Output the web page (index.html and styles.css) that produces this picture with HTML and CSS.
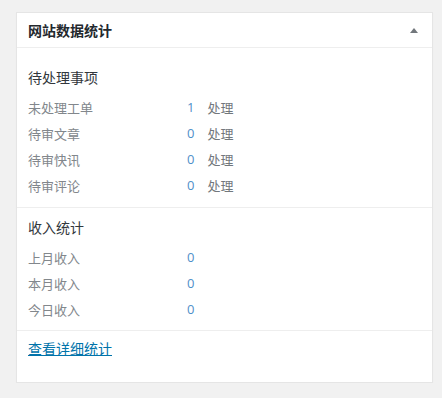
FILE: index.html
```html
<!DOCTYPE html>
<html lang="zh-CN">
<head>
<meta charset="utf-8">
<title>网站数据统计</title>
<link rel="stylesheet" href="styles.css">
</head>
<body>
<div class="card">
  <div class="card-head">
    <h2 class="card-title">网站数据统计</h2>
    <span class="toggle"></span>
  </div>
  <div class="section section-pending">
    <h3 class="section-title">待处理事项</h3>
    <div class="row"><span class="label">未处理工单</span><span class="num">1</span><span class="act">处理</span></div>
    <div class="row"><span class="label">待审文章</span><span class="num">0</span><span class="act">处理</span></div>
    <div class="row"><span class="label">待审快讯</span><span class="num">0</span><span class="act">处理</span></div>
    <div class="row"><span class="label">待审评论</span><span class="num">0</span><span class="act">处理</span></div>
  </div>
  <div class="section section-income">
    <h3 class="section-title">收入统计</h3>
    <div class="row"><span class="label">上月收入</span><span class="num">0</span></div>
    <div class="row"><span class="label">本月收入</span><span class="num">0</span></div>
    <div class="row"><span class="label">今日收入</span><span class="num">0</span></div>
  </div>
  <div class="card-foot">
    <a class="more" href="#">查看详细统计</a>
  </div>
</div>
</body>
</html>
```

FILE: styles.css
```css
html, body {
  margin: 0;
  padding: 0;
}
body {
  background: #f1f1f1;
  font-family: "Noto Sans CJK SC", "Noto Sans", "Liberation Sans", sans-serif;
  padding: 12px 0 0 16px;
}
.card {
  width: 415px;
  background: #fff;
  border: 1px solid #e5e5e5;
  box-shadow: 0 1px 1px rgba(0, 0, 0, 0.04);
}
.card-head {
  height: 34px;
  border-bottom: 1px solid #eeeeee;
  display: flex;
  align-items: center;
  justify-content: space-between;
  padding: 0 14px 0 11px;
}
.card-title {
  margin: 0;
  font-size: 14px;
  line-height: 20px;
  font-weight: 700;
  color: #23282d;
}
.toggle {
  width: 0;
  height: 0;
  border-left: 4px solid transparent;
  border-right: 4px solid transparent;
  border-bottom: 5px solid #72777c;
}
.section {
  padding: 9px 11px 9px;
  border-bottom: 1px solid #eeeeee;
}
.section-pending {
  padding-top: 19px;
}
.section-income {
  padding-bottom: 8px;
}
.section-title {
  margin: 0 0 7px;
  font-size: 14px;
  line-height: 20px;
  font-weight: 400;
  color: #32373c;
}
.row {
  display: flex;
  align-items: center;
  height: 26px;
  font-size: 13px;
  color: #82878c;
}
.label {
  width: 159px;
}
.num {
  color: #4f8fc9;
  margin-right: 13px;
  font-family: "Open Sans", "Liberation Sans", sans-serif;
}
.act {
  color: #72777c;
}
.card-foot {
  padding: 4px 11px 23px;
}
.more {
  font-size: 14px;
  line-height: 20px;
  color: #0073aa;
  text-decoration: underline;
  display: inline-block;
}
```
